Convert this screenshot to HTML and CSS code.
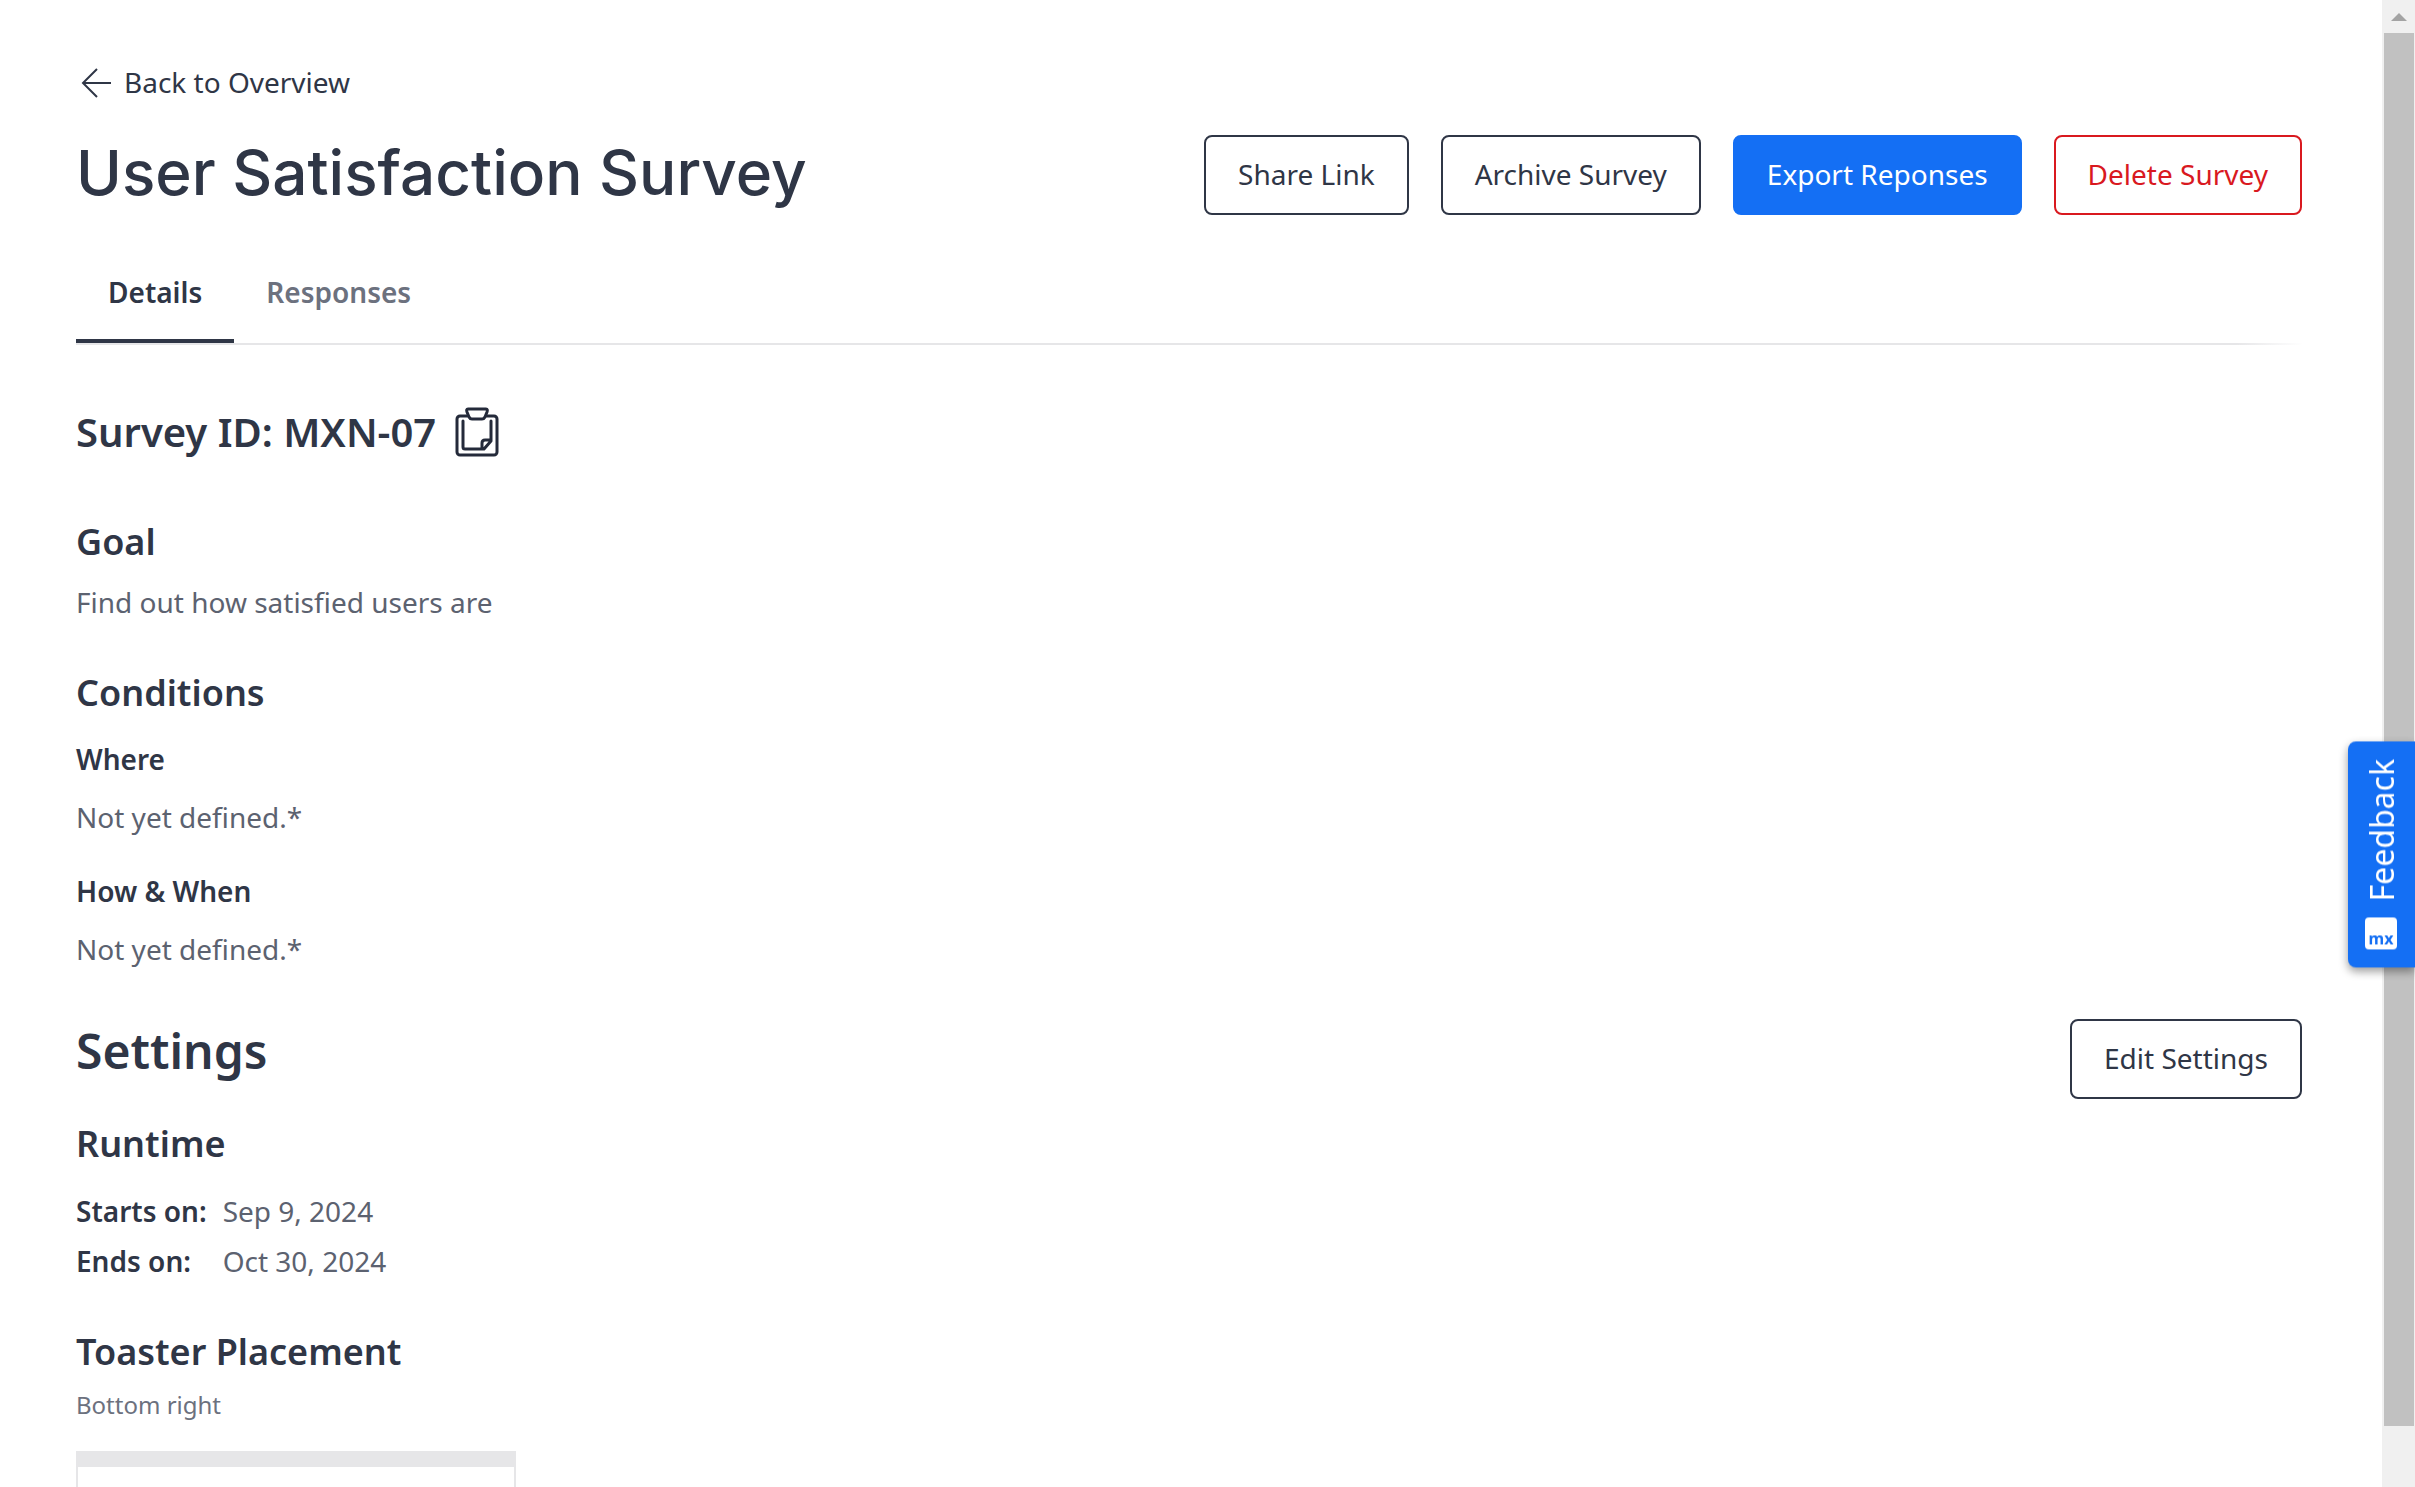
FILE: index.html
```html
<!DOCTYPE html>
<html lang="en">
<head>
  <meta charset="utf-8">
  <meta name="viewport" content="width=device-width, initial-scale=1">
  <title>User Satisfaction Survey</title>
  <link rel="stylesheet" href="styles.css">
</head>
<body>
  <div class="viewport">
    <main class="page">
      <a class="back-link" href="#overview">
        <svg class="back-icon" viewBox="0 0 36 36" aria-hidden="true"><path d="M35 19H7M21 5L7 19l14 14"/></svg>
        Back to Overview
      </a>

      <header class="page-header">
        <h1 class="page-title">User Satisfaction Survey</h1>
        <div class="actions">
          <button class="btn" type="button">Share Link</button>
          <button class="btn" type="button">Archive Survey</button>
          <button class="btn btn-primary" type="button">Export Reponses</button>
          <button class="btn btn-danger" type="button">Delete Survey</button>
        </div>
      </header>

      <nav class="tabs">
        <a class="tab tab-active" href="#details">Details</a>
        <a class="tab" href="#responses">Responses</a>
      </nav>

      <div class="survey-id">
        <h2 class="survey-id-text">Survey ID: MXN-07</h2>
        <button class="copy-btn" type="button" aria-label="Copy survey ID">
          <svg class="copy-icon" viewBox="0 0 44 50" aria-hidden="true">
            <path d="M12 9H5a3 3 0 0 0-3 3v33a3 3 0 0 0 3 3h34a3 3 0 0 0 3-3V12a3 3 0 0 0-3-3h-7"/>
            <path d="M13 2h18q2 0 1 3l-2 5q-1 2-3 2H17q-2 0-3-2l-2-5q-1-3 1-3z"/>
            <path d="M8 14v26q0 2 2 2h19l7-8V14M27 42v-6q0-3 3-3h6"/>
          </svg>
        </button>
      </div>

      <section class="section">
        <h3 class="section-title">Goal</h3>
        <p class="text">Find out how satisfied users are</p>
      </section>

      <section class="section">
        <h3 class="section-title">Conditions</h3>
        <div class="conditions">
          <div>
            <h4 class="label">Where</h4>
            <p class="text">Not yet defined.*</p>
          </div>
          <div>
            <h4 class="label">How &amp; When</h4>
            <p class="text">Not yet defined.*</p>
          </div>
        </div>
      </section>

      <div class="settings-header">
        <h2 class="settings-title">Settings</h2>
        <button class="btn" type="button">Edit Settings</button>
      </div>

      <section class="section">
        <h3 class="section-title">Runtime</h3>
        <dl class="runtime">
          <dt class="label">Starts on:</dt><dd class="runtime-value">Sep 9, 2024</dd>
          <dt class="label">Ends on:</dt><dd class="runtime-value">Oct 30, 2024</dd>
        </dl>
      </section>

      <section class="section">
        <h3 class="section-title">Toaster Placement</h3>
        <p class="caption">Bottom right</p>
        <div class="placement-preview"></div>
      </section>
    </main>

    <div class="scrollbar" aria-hidden="true">
      <svg class="scroll-arrow" viewBox="0 0 30 33"><path d="M7 21L15 13l8 8z"/></svg>
      <div class="scroll-track"><div class="scroll-thumb"></div></div>
    </div>
  </div>

  <button class="feedback" type="button">
    <span class="feedback-logo">mx</span>
    <span class="feedback-text">Feedback</span>
  </button>
</body>
</html>
```
FILE: styles.css
```css
:root {
  --ink: #2f3646;
  --muted: #6c717e;
  --body: #5c6270;
  --line: #e6e6e8;
  --blue: #146ff4;
  --red: #d9191f;
}

* {
  box-sizing: border-box;
}

body,
h1,
h2,
h3,
h4,
p,
dl,
dd {
  margin: 0;
}

body {
  background: #fff;
  color: var(--ink);
  font: 400 28px/42px "Noto Sans", sans-serif;
}

button {
  font: inherit;
  color: inherit;
  cursor: pointer;
}

.viewport {
  display: flex;
  height: 100vh;
  overflow: hidden;
}

.page {
  flex: 1;
  min-width: 0;
  padding: 61px 80px 0 76px;
}

.back-link {
  display: inline-flex;
  align-items: center;
  gap: 12px;
  color: inherit;
  text-decoration: none;
  vertical-align: top;
}

.back-icon {
  width: 36px;
  height: 36px;
  fill: none;
  stroke: currentColor;
  stroke-width: 2;
}

.page-header {
  display: flex;
  align-items: flex-start;
  justify-content: space-between;
  margin-top: 32px;
}

.page-title {
  font: 500 62px/76px Inter, sans-serif;
}

.actions {
  display: flex;
  gap: 32px;
}

.btn {
  height: 80px;
  padding: 0 32px 2px;
  border: 2px solid var(--ink);
  border-radius: 8px;
  background: #fff;
  white-space: nowrap;
}

.btn-primary {
  border-color: var(--blue);
  background: var(--blue);
  color: #fff;
}

.btn-danger {
  border-color: var(--red);
  color: var(--red);
}

.tabs {
  display: flex;
  margin-top: 32px;
  border-bottom: 2px solid;
  border-image: linear-gradient(to right, var(--line) 97%, transparent) 1;
}

.tab {
  padding: 24px 32px 26px;
  border-bottom: 4px solid transparent;
  color: var(--muted);
  font-weight: 600;
  text-decoration: none;
}

.tab-active {
  border-bottom-color: var(--ink);
  color: var(--ink);
}

.survey-id {
  display: flex;
  align-items: center;
  gap: 19px;
  margin: 56px 0 54px;
}

.survey-id-text {
  font-size: 40px;
  font-weight: 600;
  line-height: 62px;
}

.copy-btn {
  display: flex;
  padding: 0;
  border: 0;
  background: none;
}

.copy-icon {
  width: 44px;
  height: 50px;
  fill: none;
  stroke: #242a3a;
  stroke-width: 3;
  stroke-linejoin: round;
  stroke-linecap: round;
}

.section {
  margin-bottom: 45px;
}

.section-title {
  font-size: 36px;
  font-weight: 600;
  line-height: 50px;
}

.label {
  font-size: 28px;
  font-weight: 600;
}

.text {
  margin-top: 16px;
  color: var(--body);
}

.section-title + .text {
  margin-top: 14px;
}

.conditions {
  display: grid;
  gap: 32px;
  margin-top: 20px;
}

.settings-header {
  display: flex;
  align-items: flex-start;
  justify-content: space-between;
  margin: 49px 0 20px;
}

.settings-title {
  font-size: 48px;
  font-weight: 600;
  line-height: 64px;
}

.runtime {
  display: grid;
  grid-template-columns: max-content 1fr;
  gap: 8px 16px;
  margin-top: 21px;
}

.runtime-value {
  color: var(--body);
}

.caption {
  margin-top: 10px;
  color: var(--muted);
  font-size: 24px;
  line-height: 36px;
}

.placement-preview {
  width: 440px;
  height: 280px;
  margin-top: 28px;
  border: 2px solid var(--line);
  border-top-width: 16px;
}

.scrollbar {
  display: flex;
  flex-direction: column;
  width: 33px;
  padding: 0 1px 33px 2px;
  background: #f0f0f0;
}

.scroll-arrow {
  flex: none;
  height: 33px;
  fill: #a3a3a3;
}

.scroll-track {
  flex: 1;
}

.scroll-thumb {
  height: 98%;
  background: #c1c1c1;
}

.feedback {
  position: fixed;
  top: 741px;
  right: 0;
  display: flex;
  align-items: center;
  gap: 16px;
  padding: 18px 12px;
  border: 0;
  border-radius: 0 8px 8px 0;
  background: var(--blue);
  box-shadow: 0 -4px 10px rgba(0, 0, 0, 0.4);
  color: #fff;
  font-size: 32px;
  line-height: 43px;
  writing-mode: vertical-rl;
  transform: rotate(180deg);
}

/* The tab is turned upside down, so the logo is turned back upright. */
.feedback-logo {
  display: flex;
  align-items: flex-end;
  justify-content: center;
  width: 32px;
  height: 32px;
  border-radius: 4px;
  background: #fff;
  color: var(--blue);
  font-size: 16px;
  font-weight: 700;
  line-height: 22px;
  writing-mode: horizontal-tb;
  transform: rotate(180deg);
}
```
